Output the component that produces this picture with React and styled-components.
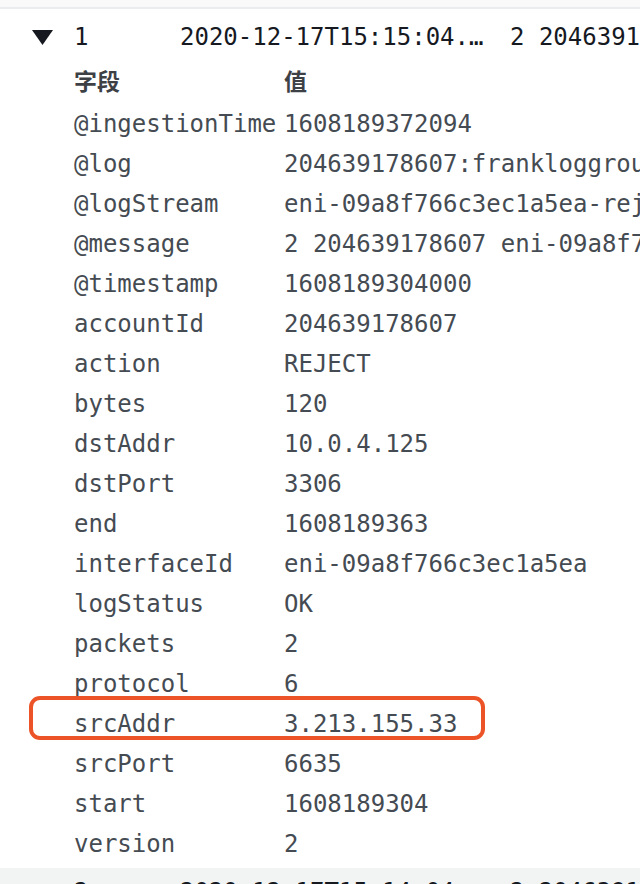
import React from "react"
import styled, { createGlobalStyle } from "styled-components"

const GlobalStyle = createGlobalStyle`
    html, body {
        margin: 0;
        padding: 0;
        background: #ffffff;
        overflow: hidden;
    }
    body {
        font-family: "DejaVu Sans Mono", "Liberation Mono", "Noto Sans CJK SC", monospace;
        font-size: 24px;
    }
`

const Page = styled.div`
    width: 640px;
    height: 884px;
    overflow: hidden;
    background: #ffffff;
`

const TopStrip = styled.div`
    height: 7px;
    background: #f9f9f9;
    border-bottom: 2px solid #eaeded;
`

const EventRow = styled.div`
    display: grid;
    grid-template-columns: 74px 106px 330px auto;
    align-items: center;
    height: 36px;
    line-height: 36px;
    padding-top: ${({ $collapsed }) => ($collapsed ? "6px" : "10px")};
    padding-bottom: ${({ $collapsed }) => ($collapsed ? "0" : "9px")};
    background: ${({ $collapsed }) => ($collapsed ? "#f2f3f3" : "transparent")};
    margin-top: ${({ $collapsed }) => ($collapsed ? "4px" : "0")};
    color: #16191f;
    white-space: nowrap;
`

const Caret = styled.span`
    display: flex;
    align-items: center;
    padding-left: 32px;
`

const Cell = styled.span`
    white-space: nowrap;
`

const Fields = styled.div`
    padding-left: 74px;
`

const FieldRow = styled.div`
    position: relative;
    display: grid;
    grid-template-columns: 210px auto;
    height: 40px;
    line-height: ${({ $head }) => ($head ? "32px" : "40px")};
    color: ${({ $head }) => ($head ? "#3d4146" : "#454b52")};
    font-weight: ${({ $head }) => ($head ? 700 : 400)};
    white-space: nowrap;
`

const HeadLabel = styled.span`
    font-family: "Noto Sans CJK SC", sans-serif;
    font-size: 23px;
`

const Highlight = styled.div`
    position: absolute;
    left: -45px;
    top: -8px;
    width: 456px;
    height: 44px;
    box-sizing: border-box;
    border: 4.5px solid #ec5428;
    border-radius: 11px;
    pointer-events: none;
`

const TriangleDown = () => (
    <svg width="21" height="15" viewBox="0 0 21 15">
        <polygon points="0,0 21,0 10.5,15" fill="#16191f" />
    </svg>
)

const TriangleRight = () => (
    <svg width="13" height="15" viewBox="0 0 13 15">
        <polygon points="0,0 13,7.5 0,15" fill="#16191f" />
    </svg>
)

const message =
    "2 204639178607 eni-09a8f766c3ec1a5ea 3.213.155.33 10.0.4.125 6635 3306 6 2 120 1608189304 1608189363 REJECT OK"

const fields = [
    ["@ingestionTime", "1608189372094"],
    ["@log", "204639178607:frankloggroup"],
    ["@logStream", "eni-09a8f766c3ec1a5ea-reject"],
    ["@message", message],
    ["@timestamp", "1608189304000"],
    ["accountId", "204639178607"],
    ["action", "REJECT"],
    ["bytes", "120"],
    ["dstAddr", "10.0.4.125"],
    ["dstPort", "3306"],
    ["end", "1608189363"],
    ["interfaceId", "eni-09a8f766c3ec1a5ea"],
    ["logStatus", "OK"],
    ["packets", "2"],
    ["protocol", "6"],
    ["srcAddr", "3.213.155.33"],
    ["srcPort", "6635"],
    ["start", "1608189304"],
    ["version", "2"],
]

export default function App() {
    return (
        <Page>
            <GlobalStyle />
            <TopStrip />
            {/* expanded event */}
            <EventRow>
                <Caret>
                    <TriangleDown />
                </Caret>
                <Cell>1</Cell>
                <Cell>2020-12-17T15:15:04.…</Cell>
                <Cell>{message}</Cell>
            </EventRow>
            <Fields>
                <FieldRow $head>
                    <HeadLabel>字段</HeadLabel>
                    <HeadLabel>值</HeadLabel>
                </FieldRow>
                {fields.map(([name, value]) => (
                    <FieldRow key={name}>
                        <Cell>{name}</Cell>
                        <Cell>{value}</Cell>
                        {name === "srcAddr" && <Highlight />}
                    </FieldRow>
                ))}
            </Fields>
            {/* next event, collapsed */}
            <EventRow $collapsed>
                <Caret>
                    <TriangleRight />
                </Caret>
                <Cell>2</Cell>
                <Cell>2020-12-17T15:14:04.…</Cell>
                <Cell>2 204639178607 eni-09a8f766c3ec1a5ea</Cell>
            </EventRow>
        </Page>
    )
}
